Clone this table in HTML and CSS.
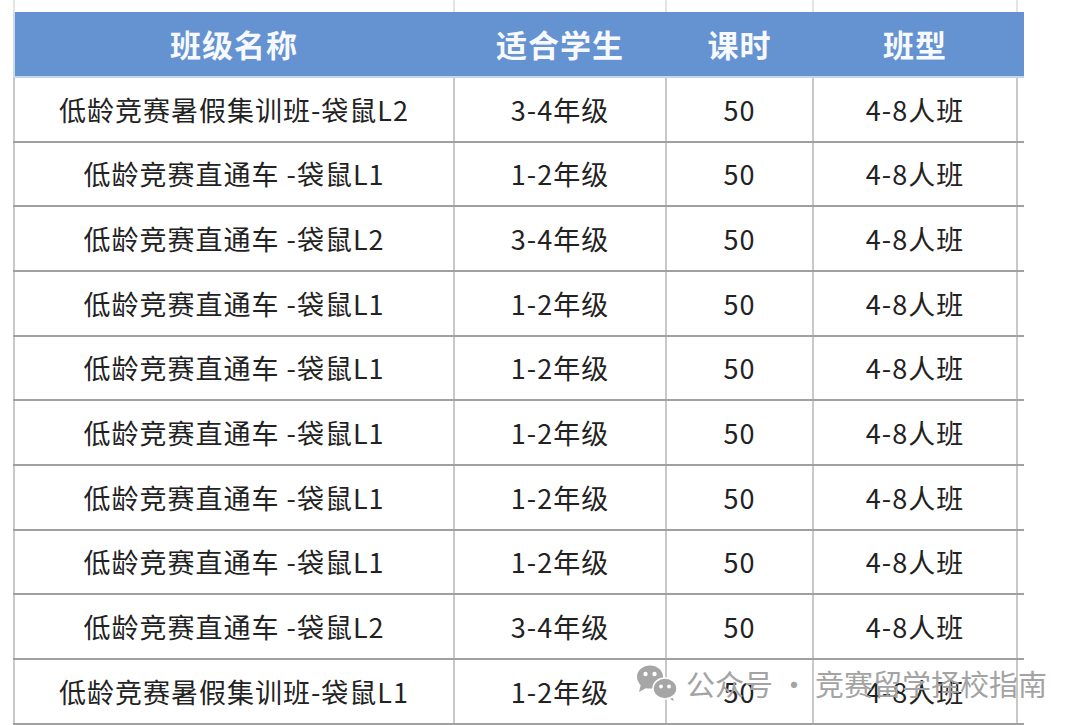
FILE: index.html
```html
<!DOCTYPE html>
<html lang="zh">
<head>
<meta charset="utf-8">
<title>班级表</title>
<link rel="stylesheet" href="styles.css">
</head>
<body>
<div class="page">
  <div class="sheet">
    <div class="row top"><div class="c"></div><div class="c"></div><div class="c"></div><div class="c"></div><div class="c end"></div></div>
    <div class="row head"><div class="c">班级名称</div><div class="c">适合学生</div><div class="c">课时</div><div class="c">班型</div><div class="c end"></div></div>
    <div class="row"><div class="c">低龄竞赛暑假集训班-袋鼠L2</div><div class="c">3-4年级</div><div class="c">50</div><div class="c">4-8人班</div><div class="c end"></div></div>
    <div class="row"><div class="c">低龄竞赛直通车 -袋鼠L1</div><div class="c">1-2年级</div><div class="c">50</div><div class="c">4-8人班</div><div class="c end"></div></div>
    <div class="row"><div class="c">低龄竞赛直通车 -袋鼠L2</div><div class="c">3-4年级</div><div class="c">50</div><div class="c">4-8人班</div><div class="c end"></div></div>
    <div class="row"><div class="c">低龄竞赛直通车 -袋鼠L1</div><div class="c">1-2年级</div><div class="c">50</div><div class="c">4-8人班</div><div class="c end"></div></div>
    <div class="row"><div class="c">低龄竞赛直通车 -袋鼠L1</div><div class="c">1-2年级</div><div class="c">50</div><div class="c">4-8人班</div><div class="c end"></div></div>
    <div class="row"><div class="c">低龄竞赛直通车 -袋鼠L1</div><div class="c">1-2年级</div><div class="c">50</div><div class="c">4-8人班</div><div class="c end"></div></div>
    <div class="row"><div class="c">低龄竞赛直通车 -袋鼠L1</div><div class="c">1-2年级</div><div class="c">50</div><div class="c">4-8人班</div><div class="c end"></div></div>
    <div class="row"><div class="c">低龄竞赛直通车 -袋鼠L1</div><div class="c">1-2年级</div><div class="c">50</div><div class="c">4-8人班</div><div class="c end"></div></div>
    <div class="row"><div class="c">低龄竞赛直通车 -袋鼠L2</div><div class="c">3-4年级</div><div class="c">50</div><div class="c">4-8人班</div><div class="c end"></div></div>
    <div class="row"><div class="c">低龄竞赛暑假集训班-袋鼠L1</div><div class="c">1-2年级</div><div class="c">50</div><div class="c">4-8人班</div><div class="c end"></div></div>
  </div>
  <div class="watermark">
    <svg class="wx" viewBox="0 0 44 38" width="44" height="38">
      <ellipse cx="14" cy="13" rx="13" ry="11.5" fill="#a6a6a6"/>
      <polygon points="5,20 3,28 12,23" fill="#a6a6a6"/>
      <circle cx="9.5" cy="10" r="2.2" fill="#fff"/>
      <circle cx="18.5" cy="10" r="2.2" fill="#fff"/>
      <polygon points="35,30 38,37 30,33" fill="#a6a6a6"/>
      <ellipse cx="29" cy="24.5" rx="12" ry="10.5" fill="#a6a6a6" stroke="#fff" stroke-width="1.6"/>
      <circle cx="25" cy="22.5" r="1.9" fill="#fff"/>
      <circle cx="33" cy="22.5" r="1.9" fill="#fff"/>
    </svg>
    <span class="wtext">公众号 · 竞赛留学择校指南</span>
  </div>
</div>
</body>
</html>
```

FILE: styles.css
```css
html, body {
  margin: 0;
  padding: 0;
  background: #ffffff;
}

.page {
  position: relative;
  width: 1080px;
  height: 725px;
  overflow: hidden;
  font-family: "Noto Sans CJK SC", "Noto Sans", sans-serif;
}

.sheet {
  margin-left: 13px;
  width: 1011px;
}

.row {
  display: grid;
  grid-template-columns: 442px 212px 147px 204px 6px;
  height: 64.67px;
  box-sizing: border-box;
  border-bottom: 2px solid #a0a0a0;
}

.c {
  box-sizing: border-box;
  border-right: 2px solid #c9c9c9;
  display: flex;
  align-items: center;
  justify-content: center;
  font-size: 27px;
  letter-spacing: 1px;
  color: #222222;
  white-space: pre;
}

.row .c:first-child {
  border-left: 2px solid #c9c9c9;
}

.c.end {
  border-right: none;
}

.row.top {
  height: 12px;
  border-bottom: none;
}

.row.top .c {
  border-color: #e4e4e4;
}

.row.top .c.end {
  border-right: none;
}

.row.head {
  height: 66px;
  background: #6592d0;
  border-bottom: 2px solid #c6d6ea;
}

.row.head .c {
  border-color: #6592d0;
  color: #f6f9ff;
  font-weight: 700;
  font-size: 31px;
  letter-spacing: 1px;
  padding-bottom: 2px;
}

.row.head .c:first-child {
  border-left-color: #c9d9ee;
}

.watermark {
  position: absolute;
  left: 636px;
  top: 664px;
  display: flex;
  align-items: center;
  gap: 6px;
}

.wx {
  display: block;
}

.wtext {
  font-size: 29px;
  color: #a3a3a3;
  white-space: pre;
  line-height: 38px;
}
```
